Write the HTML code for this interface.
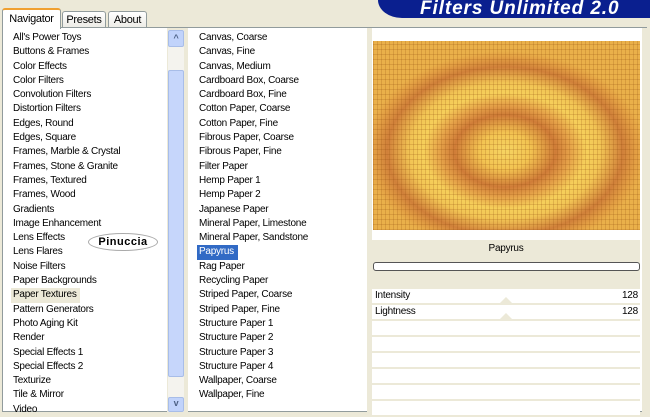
<!DOCTYPE html>
<html><head><style>
*{margin:0;padding:0;box-sizing:border-box}
body{width:650px;height:412px;background:#ece9d8;position:relative;overflow:hidden;font-family:"Liberation Sans",sans-serif;font-size:10px;letter-spacing:-0.25px;color:#000}
.abs{position:absolute}
.tab{position:absolute;border:1px solid #919b9c;border-bottom:none;background:linear-gradient(#fff,#ecebe5);text-align:center;font-size:11px;border-radius:3px 3px 0 0;letter-spacing:-0.3px}
.list div{height:14.3px;line-height:14.3px;white-space:nowrap;padding-left:2px}
.row{position:absolute;left:372px;width:268px;height:16px;border-bottom:2px solid #ece9d8;background:#fff}
</style></head><body>
<div class="abs" style="left:378px;top:0;width:272px;height:18px;background:#0a1f8f;border-bottom-left-radius:24px 18px"></div>
<div class="abs" style="left:420px;top:-2px;font-weight:bold;font-style:italic;font-size:19px;color:#fff;letter-spacing:0.9px">Filters Unlimited 2.0</div>

<div class="tab" style="left:62px;top:11px;width:44px;height:17px;line-height:16px">Presets</div>
<div class="tab" style="left:108px;top:11px;width:39px;height:17px;line-height:16px">About</div>
<div class="abs" style="left:2px;top:27px;width:645px;height:385px;background:#fff;border:1px solid #919b9c"></div>
<div class="tab" style="left:2px;top:8px;width:59px;height:21px;line-height:18px;background:#fff;border-top:2px solid #f0a030;z-index:2;border-bottom:none">Navigator</div>

<div class="abs" style="left:167px;top:28px;width:21px;height:384px;background:#ece9d8"></div>
<div class="abs" style="left:168px;top:30px;width:16px;height:382px;background:#f4f3ee"></div>
<div class="abs" style="left:168px;top:30px;width:16px;height:17px;background:#c1d3fb;border:1px solid #a8bde8;border-radius:2px;color:#4d6185;font-size:9px;text-align:center;line-height:14px;font-weight:bold">^</div>
<div class="abs" style="left:168px;top:70px;width:16px;height:307px;background:#c6d6fb;border:1px solid #a8bde8;border-radius:2px"></div>
<div class="abs" style="left:168px;top:397px;width:16px;height:15px;background:#c1d3fb;border:1px solid #a8bde8;border-radius:2px;color:#4d6185;font-size:9px;text-align:center;line-height:10px;font-weight:bold">v</div>

<div class="abs" style="left:367px;top:28px;width:5px;height:384px;background:#ece9d8"></div>
<div class="abs" style="left:642px;top:28px;width:5px;height:384px;background:#ece9d8"></div>

<div class="abs list" style="left:11px;top:31px">
<div>All's Power Toys</div><div>Buttons &amp; Frames</div><div>Color Effects</div><div>Color Filters</div><div>Convolution Filters</div><div>Distortion Filters</div><div>Edges, Round</div><div>Edges, Square</div><div>Frames, Marble &amp; Crystal</div><div>Frames, Stone &amp; Granite</div><div>Frames, Textured</div><div>Frames, Wood</div><div>Gradients</div><div>Image Enhancement</div><div>Lens Effects</div><div>Lens Flares</div><div>Noise Filters</div><div>Paper Backgrounds</div><div style="background:#ece9d8;width:69px">Paper Textures</div><div>Pattern Generators</div><div>Photo Aging Kit</div><div>Render</div><div>Special Effects 1</div><div>Special Effects 2</div><div>Texturize</div><div>Tile &amp; Mirror</div><div>Video</div>
</div>
<div class="abs" style="left:88px;top:233px;width:70px;height:18px;border:1px solid #aaa;border-radius:50%;background:#fff;text-align:center;font-weight:bold;font-size:11px;line-height:16px;letter-spacing:0.5px">Pinuccia</div>

<div class="abs list" style="left:197px;top:31px">
<div>Canvas, Coarse</div><div>Canvas, Fine</div><div>Canvas, Medium</div><div>Cardboard Box, Coarse</div><div>Cardboard Box, Fine</div><div>Cotton Paper, Coarse</div><div>Cotton Paper, Fine</div><div>Fibrous Paper, Coarse</div><div>Fibrous Paper, Fine</div><div>Filter Paper</div><div>Hemp Paper 1</div><div>Hemp Paper 2</div><div>Japanese Paper</div><div>Mineral Paper, Limestone</div><div>Mineral Paper, Sandstone</div><div style="background:#316ac5;color:#fff;width:41px">Papyrus</div><div>Rag Paper</div><div>Recycling Paper</div><div>Striped Paper, Coarse</div><div>Striped Paper, Fine</div><div>Structure Paper 1</div><div>Structure Paper 2</div><div>Structure Paper 3</div><div>Structure Paper 4</div><div>Wallpaper, Coarse</div><div>Wallpaper, Fine</div>
</div>

<div class="abs" style="left:373px;top:41px;width:267px;height:189px;background:
radial-gradient(ellipse 140px 100px at 132px 110px,#f6d462 0%,#f3c452 18%,#cf7c38 36%,#e4a048 46%,#f6cf5a 58%,#f2c555 68%,#d0803a 84%,#e3a044 94%,#eab04a 100%)">
</div>
<div class="abs" style="left:373px;top:41px;width:267px;height:189px;background:repeating-linear-gradient(90deg,rgba(140,70,10,.2) 0 1px,transparent 1px 4px),repeating-linear-gradient(0deg,rgba(140,70,10,.2) 0 1px,transparent 1px 5px)"></div>

<div class="abs" style="left:372px;top:240px;width:268px;height:49px;background:#ece9d8"></div>
<div class="abs" style="left:372px;top:243px;width:268px;text-align:center">Papyrus</div>
<div class="abs" style="left:373px;top:262px;width:267px;height:9px;border:1px solid #555;border-radius:3px;background:#fff"></div>
<div class="row" style="top:289px"></div>
<div class="row" style="top:305px"></div>
<div class="abs" style="left:375px;top:290px">Intensity</div>
<div class="abs" style="left:622px;top:290px">128</div>
<div class="abs" style="left:375px;top:306px">Lightness</div>
<div class="abs" style="left:622px;top:306px">128</div>
<div class="abs" style="left:499px;top:297px;border:7px solid transparent;border-bottom-color:#ece9d8;border-top:0"></div>
<div class="abs" style="left:499px;top:313px;border:7px solid transparent;border-bottom-color:#ece9d8;border-top:0"></div>
<div class="row" style="top:321px"></div>
<div class="row" style="top:337px"></div>
<div class="row" style="top:353px"></div>
<div class="row" style="top:369px"></div>
<div class="row" style="top:385px"></div>
<div class="row" style="top:401px"></div>
</body></html>
